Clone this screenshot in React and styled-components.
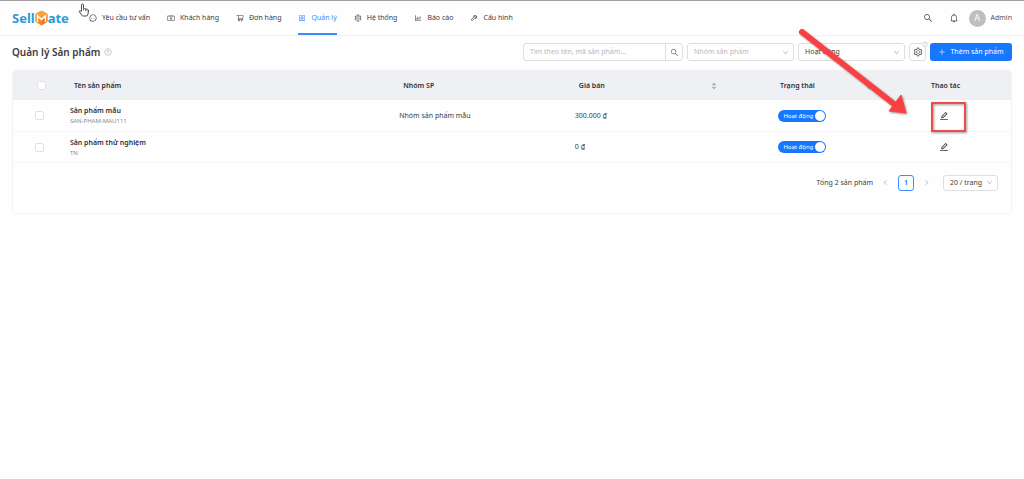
import React from "react";
import styled, { createGlobalStyle } from "styled-components";
import {
  AiOutlineMessage,
  AiOutlineContacts,
  AiOutlineShoppingCart,
  AiOutlineAppstore,
  AiOutlineSetting,
  AiOutlineBarChart,
  AiOutlineTool,
  AiOutlineSearch,
  AiOutlineBell,
  AiOutlineQuestionCircle,
  AiOutlineEdit,
  AiOutlineDown,
  AiOutlineLeft,
  AiOutlineRight,
  AiOutlinePlus,
  AiFillCaretUp,
  AiFillCaretDown,
} from "react-icons/ai";

const GlobalStyle = createGlobalStyle`
  *, *::before, *::after { box-sizing: border-box; }
  body {
    margin: 0;
    background: #fefefe;
    color: #3c3c3e;
    font: 7px/12px "Noto Sans", sans-serif;
  }
  button, input, select { font: inherit; color: inherit; margin: 0; }
  svg { display: block; flex: none; }
`;

const Page = styled.div`
  position: relative;
  min-height: 100vh;
  border-top: 1px solid #a2a2a4;
`;

const Header = styled.header`
  display: flex;
  align-items: stretch;
  height: 35px;
  padding: 0 12px;
  border-bottom: 1px solid #f1f1f1;
`;

const Logo = styled.a`
  display: flex;
  align-items: center;
  width: 77px;
  color: #2b9bd7;
  font-size: 13px;
  font-weight: 700;
  text-decoration: none;
`;

const Nav = styled.nav`
  display: flex;
  gap: 17px;
  flex: 1;
`;

const NavLink = styled.a`
  display: flex;
  align-items: center;
  gap: 5px;
  padding-top: 2px;
  border-bottom: 2px solid ${(p) => (p.$active ? "#3c8cff" : "transparent")};
  color: ${(p) => (p.$active ? "#3c8cff" : "#3c3c3e")};
  text-decoration: none;
  white-space: nowrap;
`;

const Account = styled.div`
  display: flex;
  align-items: center;
  gap: 16px;
`;

const IconButton = styled.button`
  display: flex;
  align-items: center;
  justify-content: center;
  padding: 0;
  border: 0;
  background: none;
  color: ${(p) => (p.$muted ? "#a8a8a8" : "#4a4a4c")};
`;

const User = styled.a`
  display: flex;
  align-items: center;
  gap: 5px;
  margin-left: -6px;
  color: #555;
  text-decoration: none;
`;

const Avatar = styled.span`
  display: grid;
  place-items: center;
  width: 17px;
  height: 17px;
  border-radius: 50%;
  background: #bfbfbf;
  color: #fff;
  font-size: 9px;
`;

const Toolbar = styled.div`
  display: flex;
  align-items: center;
  justify-content: space-between;
  padding: 7px 12px 9px;
`;

const Heading = styled.div`
  display: flex;
  align-items: center;
  gap: 4px;
`;

const Title = styled.h1`
  margin: 0;
  font-size: 10px;
  line-height: 18px;
  font-weight: 600;
  color: #3c3c3e;
`;

const Controls = styled.div`
  display: flex;
  gap: 4px;
`;

const SearchBox = styled.div`
  display: flex;
  width: 160px;
  height: 18px;
  border: 1px solid #dedede;
  border-radius: 3px;
  overflow: hidden;
`;

const SearchInput = styled.input`
  flex: 1;
  min-width: 0;
  padding: 0 6px;
  border: 0;
  background: none;
  &::placeholder { color: #b8b8b8; opacity: 1; }
`;

const SearchButton = styled(IconButton)`
  width: 17px;
  border-left: 1px solid #dedede;
  color: #707070;
`;

const SelectBox = styled.span`
  display: grid;
  align-items: center;
  width: ${(p) => p.$width};
  height: ${(p) => p.$height};
  > * { grid-area: 1 / 1; }
  > svg {
    justify-self: end;
    margin-right: 5px;
    color: #a8a8a8;
    pointer-events: none;
  }
`;

const Select = styled.select`
  appearance: none;
  width: 100%;
  height: 100%;
  padding: 0 6px;
  border: 1px solid #dedede;
  border-radius: 3px;
  background: #fff;
  color: ${(p) => (p.$placeholder ? "#b8b8b8" : "#3c3c3e")};
`;

const SettingsGroup = styled.div`
  position: relative;
`;

const SettingsButton = styled(IconButton)`
  width: 17px;
  height: 18px;
  border: 1px solid #dedede;
  border-radius: 3px;
`;

const SettingsHelp = styled.span`
  position: absolute;
  top: -2px;
  right: -2px;
  border-radius: 50%;
  background: #fefefe;
  color: #b4b4b4;
`;

const AddButton = styled.button`
  display: flex;
  align-items: center;
  justify-content: center;
  gap: 4px;
  width: 82px;
  height: 18px;
  padding: 0;
  border: 0;
  border-radius: 3px;
  background: #1677ff;
  color: #fff;
`;

const Card = styled.section`
  margin: 0 12px;
  border: 1px solid #f3f3f4;
  border-top: 0;
  border-radius: 4px;
  overflow: hidden;
`;

const Table = styled.table`
  width: 100%;
  table-layout: fixed;
  border-collapse: collapse;
`;

const Col = styled.col`
  width: ${(p) => p.$width};
`;

const HeadCell = styled.th`
  height: 30px;
  padding: 1px 4px 0 8px;
  background: #eff0f4;
  color: #303033;
  font-weight: 600;
  text-align: ${(p) => p.$align || "left"};
`;

const Cell = styled.td`
  height: 31px;
  padding: 1px 4px 0;
  border-bottom: 1px solid #f6f6f6;
  text-align: ${(p) => p.$align || "left"};
`;

const HeadSort = styled.div`
  display: flex;
  align-items: center;
  text-align: ${(p) => p.$align || "left"};
  > span { flex: 1; }
`;

const Sorter = styled(IconButton)`
  flex-direction: column;
  color: #aaaaad;
  svg + svg { margin-top: -2px; }
`;

const Tick = styled.input`
  appearance: none;
  display: block;
  width: 9px;
  height: 9px;
  margin: 0 auto;
  border: 1px solid #e2e2e2;
  border-radius: 2px;
  background: #fff;
`;

const ProductName = styled.div`
  font-weight: 600;
  line-height: 11px;
  color: #303033;
`;

const ProductCode = styled.div`
  font-size: 6px;
  line-height: 10px;
  color: #8c8c8c;
`;

const Switch = styled.label`
  display: inline-flex;
  align-items: center;
  justify-content: space-between;
  width: 48px;
  height: 12px;
  margin-left: 8px;
  padding: 0 1px 0 5px;
  border-radius: 6px;
  background: #1677ff;
  color: #fff;
  font-size: 6px;
  white-space: nowrap;
  vertical-align: middle;
`;

const SwitchInput = styled.input`
  appearance: none;
  width: 10px;
  height: 10px;
  border-radius: 50%;
  background: #fff;
`;

const EditButton = styled(IconButton)`
  margin: 0 auto;
  color: #303033;
`;

const Pagination = styled.nav`
  display: flex;
  align-items: center;
  justify-content: flex-end;
  gap: 9px;
  padding: 12px 13px 22px;
`;

const PageLink = styled.a`
  display: grid;
  place-items: center;
  width: 16px;
  height: 16px;
  border: 1px solid #3c8cff;
  border-radius: 3px;
  color: #1677ff;
  font-weight: 600;
  text-decoration: none;
`;

const PageSize = styled.div`
  margin-left: 4px;
`;

const Annotation = styled.svg`
  position: absolute;
  top: -1px;
  right: 0;
  pointer-events: none;
  filter: drop-shadow(1px 1px 1px rgba(0, 0, 0, 0.4));
`;

const Cursor = styled.svg`
  position: absolute;
  top: 2px;
  left: 78px;
  pointer-events: none;
`;

const menu = [
  { label: "Yêu cầu tư vấn", Icon: AiOutlineMessage },
  { label: "Khách hàng", Icon: AiOutlineContacts },
  { label: "Đơn hàng", Icon: AiOutlineShoppingCart },
  { label: "Quản lý", Icon: AiOutlineAppstore, active: true },
  { label: "Hệ thống", Icon: AiOutlineSetting },
  { label: "Báo cáo", Icon: AiOutlineBarChart },
  { label: "Cấu hình", Icon: AiOutlineTool },
];

const products = [
  { name: "Sản phẩm mẫu", code: "SAN-PHAM-MAU111", group: "Nhóm sản phẩm mẫu", price: "300.000 ₫" },
  { name: "Sản phẩm thử nghiệm", code: "TN", group: "", price: "0 ₫" },
];

const columnWidths = ["5.3%", "33%", "17.6%", "15%", "15.6%", "13.5%"];

function LogoMark() {
  return (
    <svg width="13" height="16" viewBox="0 0 13 16" aria-hidden="true">
      <path d="M6.5 .5 12.5 3.5v8L6.5 15.5 .5 11.5v-8z" fill="#f9a13a" />
      <path d="M6.5 9 12.5 4.500v7L6.5 15.5z" fill="#ee7623" />
      <path d="M6.5 9 .5 4.500v7L6.5 15.5z" fill="#f58a1f" />
      <path d="M2.5 12V6L6.5 9.500l4-3.500V12" fill="none" stroke="#fff" strokeWidth="1.500" />
    </svg>
  );
}

function DropDown({ label, options, width, height = "18px", placeholder }) {
  return (
    <SelectBox $width={width} $height={height}>
      <Select aria-label={label} $placeholder={placeholder}>
        {options.map((option) => (
          <option key={option}>{option}</option>
        ))}
      </Select>
      <AiOutlineDown size={7} />
    </SelectBox>
  );
}

function SortHeading({ children, align }) {
  return (
    <HeadSort $align={align}>
      <span>{children}</span>
      <Sorter aria-label={`Sắp xếp ${children}`}>
        <AiFillCaretUp size={6} />
        <AiFillCaretDown size={6} />
      </Sorter>
    </HeadSort>
  );
}

function ProductRow({ product }) {
  return (
    <tr>
      <Cell>
        <Tick type="checkbox" aria-label={`Chọn ${product.name}`} />
      </Cell>
      <Cell>
        <ProductName>{product.name}</ProductName>
        <ProductCode>{product.code}</ProductCode>
      </Cell>
      <Cell>{product.group}</Cell>
      <Cell>{product.price}</Cell>
      <Cell $align="center">
        <Switch>
          Hoạt động
          <SwitchInput type="checkbox" role="switch" defaultChecked />
        </Switch>
      </Cell>
      <Cell>
        <EditButton aria-label={`Sửa ${product.name}`}>
          <AiOutlineEdit size={10} />
        </EditButton>
      </Cell>
    </tr>
  );
}

export default function App() {
  return (
    <>
      <GlobalStyle />
      <Page>
        <Header>
          <Logo href="#">
            Sell
            <LogoMark />
            ate
          </Logo>
          <Nav>
            {menu.map(({ label, Icon, active }) => (
              <NavLink key={label} href="#" $active={active}>
                <Icon size={8} />
                {label}
              </NavLink>
            ))}
          </Nav>
          <Account>
            <IconButton aria-label="Tìm kiếm">
              <AiOutlineSearch size={10} />
            </IconButton>
            <IconButton aria-label="Thông báo">
              <AiOutlineBell size={10} />
            </IconButton>
            <User href="#">
              <Avatar>A</Avatar>
              Admin
            </User>
          </Account>
        </Header>

        <main>
          <Toolbar>
            <Heading>
              <Title>Quản lý Sản phẩm</Title>
              <IconButton $muted aria-label="Trợ giúp">
                <AiOutlineQuestionCircle size={8} />
              </IconButton>
            </Heading>
            <Controls>
              <SearchBox>
                <SearchInput aria-label="Tìm sản phẩm" placeholder="Tìm theo tên, mã sản phẩm..." />
                <SearchButton aria-label="Tìm">
                  <AiOutlineSearch size={9} />
                </SearchButton>
              </SearchBox>
              <DropDown label="Nhóm sản phẩm" options={["Nhóm sản phẩm"]} width="107px" placeholder />
              <DropDown label="Trạng thái" options={["Hoạt động"]} width="107px" />
              <SettingsGroup>
                <SettingsButton aria-label="Thiết lập">
                  <AiOutlineSetting size={10} />
                </SettingsButton>
                <SettingsHelp>
                  <AiOutlineQuestionCircle size={6} />
                </SettingsHelp>
              </SettingsGroup>
              <AddButton>
                <AiOutlinePlus size={8} />
                Thêm sản phẩm
              </AddButton>
            </Controls>
          </Toolbar>

          <Card>
            <Table>
              <colgroup>
                {columnWidths.map((width, index) => (
                  <Col key={index} $width={width} />
                ))}
              </colgroup>
              <thead>
                <tr>
                  <HeadCell>
                    <Tick type="checkbox" aria-label="Chọn tất cả" />
                  </HeadCell>
                  <HeadCell>Tên sản phẩm</HeadCell>
                  <HeadCell>Nhóm SP</HeadCell>
                  <HeadCell>
                    <SortHeading>Giá bán</SortHeading>
                  </HeadCell>
                  <HeadCell>
                    <SortHeading align="center">Trạng thái</SortHeading>
                  </HeadCell>
                  <HeadCell $align="center">Thao tác</HeadCell>
                </tr>
              </thead>
              <tbody>
                {products.map((product) => (
                  <ProductRow key={product.code} product={product} />
                ))}
              </tbody>
            </Table>
            <Pagination aria-label="Phân trang">
              <span>Tổng 2 sản phẩm</span>
              <IconButton $muted aria-label="Trang trước">
                <AiOutlineLeft size={7} />
              </IconButton>
              <PageLink href="#">1</PageLink>
              <IconButton $muted aria-label="Trang sau">
                <AiOutlineRight size={7} />
              </IconButton>
              <PageSize>
                <DropDown label="Số dòng mỗi trang" options={["20 / trang"]} width="55px" height="16px" />
              </PageSize>
            </Pagination>
          </Card>
        </main>

        <Cursor width="12" height="14" viewBox="0 0 12 14" aria-hidden="true">
          <path
            d="M3.5 8V2a1 1 0 0 1 2 0v3.5l4 .8q1.200 .4 1 1.700L10 11l-1 2H4.500L1 8.500Q1.500 7 3.500 8.500"
            fill="#fff"
            stroke="#505052"
          />
          <path d="M5.500 5.500v2M7.500 6v2M9 6.500v2" stroke="#505052" strokeWidth=".7" />
        </Cursor>
        <Annotation width="240" height="140" viewBox="0 0 240 140" aria-hidden="true">
          <path d="M18 32 110 104" stroke="#f94144" strokeWidth="6" strokeLinecap="round" />
          <path d="M122 113 105 111 117 95z" fill="#f94144" stroke="#f94144" />
          <rect x="148" y="103" width="33" height="28" fill="none" stroke="#ee4b4d" strokeWidth="2" />
        </Annotation>
      </Page>
    </>
  );
}
